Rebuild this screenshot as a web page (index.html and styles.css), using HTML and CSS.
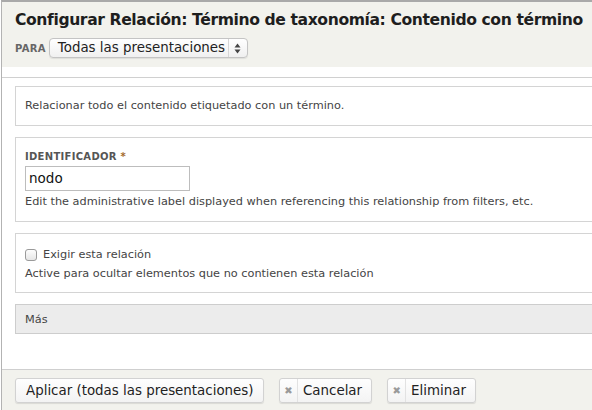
FILE: index.html
```html
<!DOCTYPE html>
<html lang="es">
<head>
<meta charset="utf-8">
<link rel="stylesheet" href="styles.css">
</head>
<body>
<div class="frame">
  <div class="header">
    <h1 class="title">Configurar Relación: Término de taxonomía: Contenido con término</h1>
    <div class="override">
      <span class="para">PARA</span>
      <div class="select">
        <span class="select-text">Todas las presentaciones</span>
        <span class="select-arrows">
          <svg width="7" height="11" viewBox="0 0 7 11"><path d="M3.5 0.5 L6.5 4.5 L0.5 4.5 Z M3.5 10.5 L6.5 6.5 L0.5 6.5 Z" fill="#444"/></svg>
        </span>
      </div>
    </div>
  </div>
  <div class="body">
    <div class="content">
      <div class="box box-desc">Relacionar todo el contenido etiquetado con un término.</div>
      <div class="box box-field">
        <div class="label">IDENTIFICADOR <span class="req">*</span></div>
        <div class="input">nodo</div>
        <div class="help">Edit the administrative label displayed when referencing this relationship from filters, etc.</div>
      </div>
      <div class="box box-check">
        <div class="check-row"><span class="checkbox"></span><span class="check-label">Exigir esta relación</span></div>
        <div class="help">Active para ocultar elementos que no contienen esta relación</div>
      </div>
      <div class="box box-more">Más</div>
    </div>
  </div>
  <div class="footer">
    <div class="btn btn-apply">Aplicar (todas las presentaciones)</div>
    <div class="btn btn-icon"><span class="x">✖</span><span class="btn-text">Cancelar</span></div>
    <div class="btn btn-icon"><span class="x">✖</span><span class="btn-text">Eliminar</span></div>
  </div>
</div>
</body>
</html>
```

FILE: styles.css
```css
html, body {
  margin: 0;
  padding: 0;
  background: #ffffff;
}
body {
  width: 592px;
  height: 410px;
  overflow: hidden;
  font-family: "DejaVu Sans", Verdana, sans-serif;
  color: #333;
}
.frame {
  margin-left: 1px;
  border-top: 2px solid #a9a9a9;
  border-left: 1px solid #b3b3b3;
  height: 408px;
  display: flex;
  flex-direction: column;
  background: #f2f2ed;
}
.header {
  background: #f2f2ed;
  height: 65px;
  padding: 0 0 0 13px;
  box-sizing: border-box;
}
.title {
  margin: 0;
  padding-top: 9px;
  font-size: 15.6px;
  font-weight: bold;
  color: #1e1e1e;
  line-height: 18px;
  white-space: nowrap;
  letter-spacing: -0.4px;
}
.override {
  display: flex;
  align-items: center;
  margin-top: 9px;
  gap: 3px;
}
.para {
  font-size: 10px;
  font-weight: bold;
  color: #666;
  letter-spacing: 0.3px;
}
.select {
  display: flex;
  align-items: stretch;
  width: 199px;
  height: 20px;
  box-sizing: border-box;
  border: 1px solid #c4c4c4;
  border-radius: 4px;
  background: linear-gradient(#ffffff, #f0f0f0);
  box-shadow: 0 1px 1px rgba(0,0,0,0.08);
}
.select-text {
  flex: 1;
  font-size: 13.4px;
  line-height: 18px;
  padding-left: 8px;
  color: #222;
  white-space: nowrap;
}
.select-arrows {
  width: 18px;
  border-left: 1px solid #d6d6d6;
  display: flex;
  align-items: center;
  justify-content: center;
}
.body {
  flex: 1;
  background: #fff;
  padding-top: 10px;
}
.content {
  border-top: 1px solid #d0d0d0;
  padding: 8px 0 0 13px;
  display: flex;
  flex-direction: column;
  gap: 11px;
}
.box {
  border: 1px solid #d4d4d4;
  border-right: none;
  font-size: 11.3px;
  line-height: 14px;
  color: #444;
}
.box-desc {
  padding: 12px 0 0 9px;
  box-sizing: border-box;
  height: 40px;
}
.box-field {
  height: 85px;
  box-sizing: border-box;
  padding: 12px 0 0 9px;
}
.label {
  font-size: 10px;
  font-weight: bold;
  color: #555;
  letter-spacing: 0.3px;
  line-height: 14px;
}
.req {
  color: #a56a2c;
}
.input {
  margin-top: 2px;
  width: 165px;
  height: 25px;
  box-sizing: border-box;
  border: 1px solid #bdbdbd;
  font-size: 13.5px;
  line-height: 23px;
  padding-left: 3px;
  color: #111;
}
.help {
  margin-top: 4px;
  font-size: 11.3px;
  line-height: 14px;
  color: #444;
}
.box-check {
  height: 60px;
  box-sizing: border-box;
  padding: 14px 0 0 9px;
}
.check-row {
  display: flex;
  align-items: center;
  gap: 6px;
}
.checkbox {
  width: 10px;
  height: 10px;
  border: 1px solid #9a9a9a;
  border-radius: 3px;
  background: linear-gradient(#fdfdfd, #e6e6e6);
}
.check-label {
  font-size: 11.3px;
  color: #444;
}
.box-check .help {
  margin-top: 5px;
}
.box-more {
  height: 30px;
  box-sizing: border-box;
  background: #ececec;
  border-color: #cdcdcd;
  padding: 8px 0 0 9px;
  color: #444;
}
.footer {
  height: 41px;
  border-top: 1px solid #cfcfcf;
  background: #f2f2ed;
  display: flex;
  align-items: flex-start;
  padding: 8px 0 0 13px;
  gap: 15px;
  box-sizing: border-box;
  flex: none;
}
.btn {
  height: 25px;
  box-sizing: border-box;
  border: 1px solid #d2d2d2;
  border-radius: 3px;
  background: linear-gradient(#fefefe, #f3f3f3);
  box-shadow: 0 1px 1px rgba(0,0,0,0.1);
  font-size: 13.4px;
  line-height: 23px;
  color: #222;
  white-space: nowrap;
  display: flex;
}
.btn-apply {
  width: 249px;
  padding-left: 10px;
}
.btn-icon {
  padding-right: 9px;
}
.x {
  width: 17px;
  border-right: 1px solid #e2e2e2;
  color: #9a9a9a;
  font-size: 10px;
  text-align: center;
  margin-right: 5px;
}
```
